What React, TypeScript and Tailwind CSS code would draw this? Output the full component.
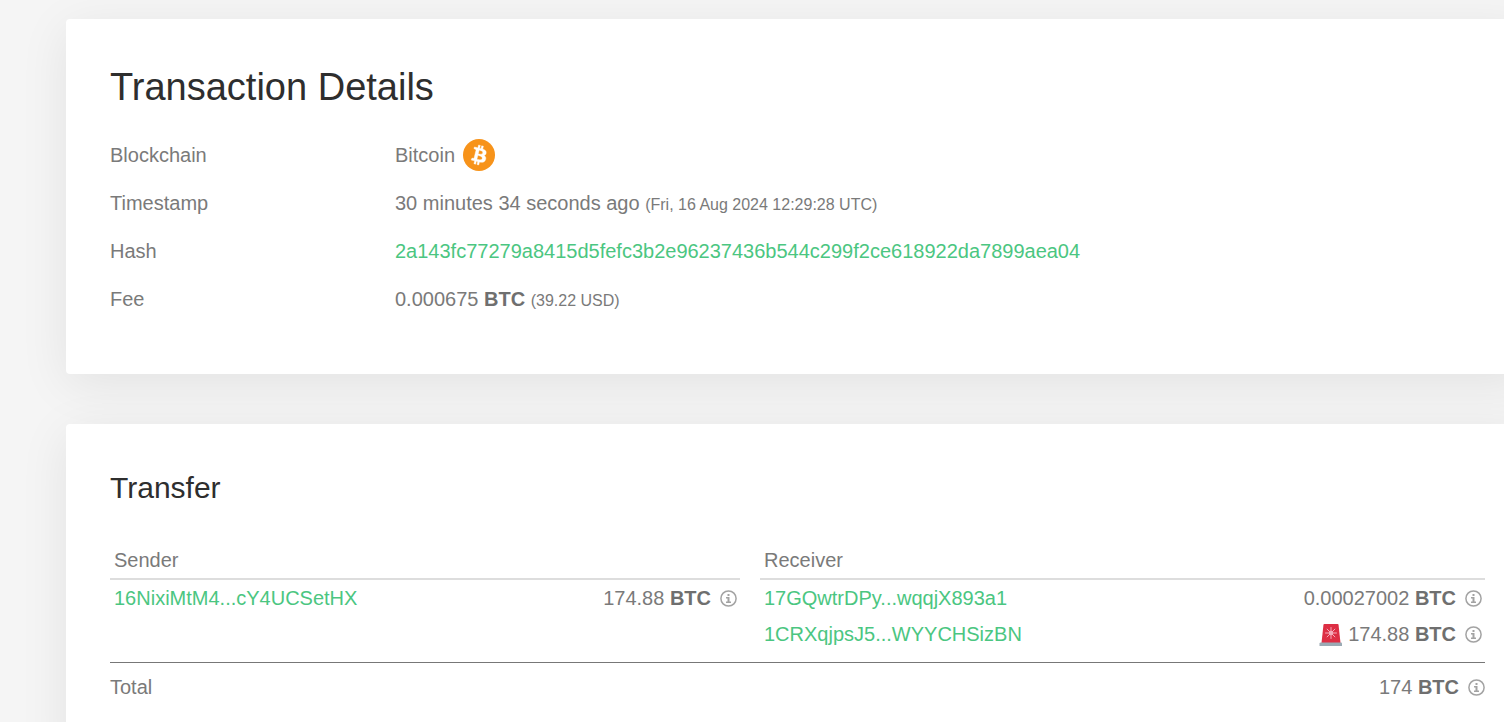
import React from 'react';

interface Entry {
  address: string;
  amount: string;
  flagged?: boolean;
}

const senders: Entry[] = [{ address: '16NixiMtM4...cY4UCSetHX', amount: '174.88' }];

const receivers: Entry[] = [
  { address: '17GQwtrDPy...wqqjX893a1', amount: '0.00027002' },
  { address: '1CRXqjpsJ5...WYYCHSizBN', amount: '174.88', flagged: true },
];

function BitcoinLogo() {
  return (
    <svg viewBox="0 0 32 32" className="h-8 w-8 shrink-0" aria-hidden="true">
      <circle cx="16" cy="16" r="16" fill="#f7931a" />
      <path
        fill="#fff"
        stroke="#fff"
        strokeWidth="0.4"
        d="M23.189 14.02c.314-2.096-1.283-3.223-3.465-3.975l.708-2.84-1.728-.43-.69 2.765c-.454-.114-.92-.22-1.385-.326l.695-2.783L15.596 6l-.708 2.839c-.376-.086-.746-.17-1.104-.26l.002-.009-2.384-.595-.46 1.846s1.283.294 1.256.312c.7.175.826.638.805 1.006l-.806 3.235c.048.012.11.03.18.057l-.183-.045-1.13 4.532c-.086.212-.303.531-.793.41.018.025-1.256-.313-1.256-.313l-.858 1.978 2.25.561c.418.105.828.215 1.231.318l-.715 2.872 1.727.43.708-2.84c.472.127.93.245 1.378.357l-.706 2.828 1.728.43.715-2.866c2.948.558 5.164.333 6.097-2.333.752-2.146-.037-3.385-1.588-4.192 1.13-.26 1.98-1.003 2.207-2.538zm-3.95 5.538c-.533 2.147-4.148.986-5.32.695l.95-3.805c1.172.293 4.929.872 4.37 3.11zm.535-5.569c-.487 1.953-3.495.96-4.47.717l.86-3.45c.975.243 4.118.696 3.61 2.733z"
      />
    </svg>
  );
}

function InfoIcon() {
  return (
    <svg viewBox="0 0 18 18" className="h-[18px] w-[18px] shrink-0 text-[#a3a3a3]" aria-hidden="true">
      <circle cx="9.5" cy="9.5" r="7.6" fill="none" stroke="currentColor" strokeWidth="1.5" />
      <path fill="currentColor" d="M8.500 5h2v2h-2zM7 8h3.500v4.500h1.500V14H7v-1.500h1.500v-3H7z" />
    </svg>
  );
}

function SirenIcon() {
  return (
    <svg viewBox="0 0 24 24" className="h-6 w-6 shrink-0" aria-hidden="true">
      <path fill="#dd2e44" d="M5.500 2.500Q5.700 2 6.400 2h13.200q.7 0 .9.500L22.500 21h-19z" />
      <path
        stroke="#f4abba"
        strokeWidth="1"
        strokeLinecap="round"
        d="M13 5.500v11M7.500 11h11M9.100 7.100l7.800 7.800M16.900 7.100l-7.800 7.800"
      />
      <circle cx="13" cy="11" r="2.200" fill="#f4abba" />
      <path fill="#9aaab4" d="M3 20.500h20q1 0 1 1V24H1.500v-2.500q0-1 1.500-1z" />
    </svg>
  );
}

function Amount({ value, flagged }: { value: string; flagged?: boolean }) {
  return (
    <span className="flex items-center justify-end">
      {flagged && <SirenIcon />}
      <span className="ml-1.5 mr-2">
        {value} <b className="text-[#6f6f6f]">BTC</b>
      </span>
      <InfoIcon />
    </span>
  );
}

function TransferTable({ title, entries }: { title: string; entries: Entry[] }) {
  return (
    <table className="w-full border-separate border-spacing-0 self-start">
      <thead>
        <tr>
          <th colSpan={2} scope="col" className="h-[38px] border-b-2 border-[#ddd] px-1 text-left font-normal">
            {title}
          </th>
        </tr>
      </thead>
      <tbody>
        {entries.map((entry) => (
          <tr key={entry.address}>
            <td className="h-9 px-1">
              <a href="#" className="text-[#4bc681]">
                {entry.address}
              </a>
            </td>
            <td className="h-9 pr-[3px]">
              <Amount value={entry.amount} flagged={entry.flagged} />
            </td>
          </tr>
        ))}
      </tbody>
    </table>
  );
}

function DetailRow({ label, children }: { label: string; children: React.ReactNode }) {
  return (
    <div className="flex h-12 items-center">
      <dt className="w-[285px] shrink-0">{label}</dt>
      <dd>{children}</dd>
    </div>
  );
}

export default function App() {
  return (
    <div className="min-h-screen overflow-hidden bg-[#f5f5f5] pl-[66px] pt-[19px] font-['Liberation_Sans',Arial,sans-serif] text-[20px] leading-[30px] text-[#7a7a7a]">
      {/* Cards run past the right edge of the window */}
      <main className="-mr-[25px] flex flex-col gap-[50px]">
        <section className="rounded-[4px] bg-white px-11 pb-[51px] pt-11 shadow-[0_10px_50px_rgba(0,0,0,0.08)]">
          <h1 className="mb-5 text-[38px] leading-[48px] text-[#2e2e2e]">Transaction Details</h1>
          <dl>
            <DetailRow label="Blockchain">
              <span className="flex items-center gap-2">
                Bitcoin <BitcoinLogo />
              </span>
            </DetailRow>
            <DetailRow label="Timestamp">
              30 minutes 34 seconds ago{' '}
              <small className="text-[16px] leading-none">(Fri, 16 Aug 2024 12:29:28 UTC)</small>
            </DetailRow>
            <DetailRow label="Hash">
              <a href="#" className="text-[#4bc681]">
                2a143fc77279a8415d5fefc3b2e96237436b544c299f2ce618922da7899aea04
              </a>
            </DetailRow>
            <DetailRow label="Fee">
              0.000675 <b className="text-[#6f6f6f]">BTC</b>{' '}
              <small className="text-[16px] leading-none">(39.22 USD)</small>
            </DetailRow>
          </dl>
        </section>

        <section className="rounded-[4px] bg-white px-11 pb-12 pt-11 shadow-[0_10px_50px_rgba(0,0,0,0.08)]">
          <h2 className="mb-[34px] text-[30px] leading-[40px] text-[#2e2e2e]">Transfer</h2>
          <div className="grid grid-cols-[630fr_725fr] gap-5 pb-2.5">
            <TransferTable title="Sender" entries={senders} />
            <TransferTable title="Receiver" entries={receivers} />
          </div>
          <div className="flex h-12 items-center justify-between border-t border-[#777]">
            <span>Total</span>
            <Amount value="174" />
          </div>
        </section>
      </main>
    </div>
  );
}
